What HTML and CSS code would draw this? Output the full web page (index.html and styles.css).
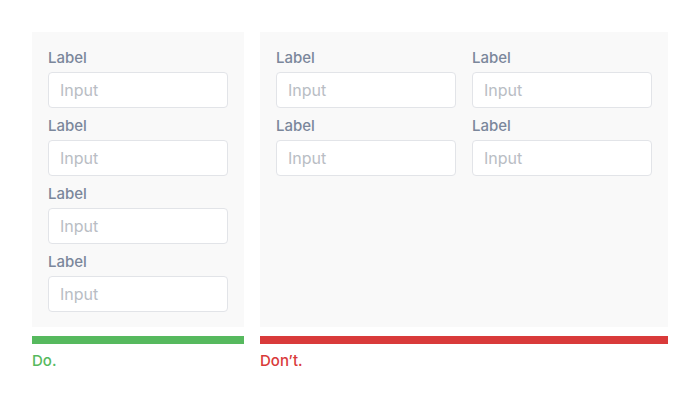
FILE: index.html
```html
<!DOCTYPE html>
<html lang="en">
<head>
  <meta charset="UTF-8">
  <meta name="viewport" content="width=device-width, initial-scale=1.0">
  <title>Form layout: Do / Don't</title>
  <link rel="stylesheet" href="styles.css">
</head>
<body>
  <div class="compare">
    <div class="example narrow">
      <form class="panel">
        <div class="field">
          <label>Label</label>
          <input type="text" placeholder="Input">
        </div>
        <div class="field">
          <label>Label</label>
          <input type="text" placeholder="Input">
        </div>
        <div class="field">
          <label>Label</label>
          <input type="text" placeholder="Input">
        </div>
        <div class="field">
          <label>Label</label>
          <input type="text" placeholder="Input">
        </div>
      </form>
      <div class="bar do"></div>
      <p class="caption do">Do.</p>
    </div>

    <div class="example wide">
      <form class="panel two-cols">
        <div class="field">
          <label>Label</label>
          <input type="text" placeholder="Input">
        </div>
        <div class="field">
          <label>Label</label>
          <input type="text" placeholder="Input">
        </div>
        <div class="field">
          <label>Label</label>
          <input type="text" placeholder="Input">
        </div>
        <div class="field">
          <label>Label</label>
          <input type="text" placeholder="Input">
        </div>
      </form>
      <div class="bar dont"></div>
      <p class="caption dont">Don’t.</p>
    </div>
  </div>
</body>
</html>
```

FILE: styles.css
```css
body {
  margin: 0;
  padding: 32px;
  font-family: 'Inter', 'Noto Sans', sans-serif;
  background: #fff;
}

.compare {
  display: flex;
  gap: 16px;
}

.narrow {
  width: 212px;
}

.wide {
  width: 408px;
}

.panel {
  background: #f9f9f9;
  padding: 16px;
  height: 295px;
  box-sizing: border-box;
  display: grid;
  grid-template-columns: minmax(0, 1fr);
  row-gap: 8px;
  align-content: start;
  margin: 0;
}

.two-cols {
  grid-template-columns: 180px 180px;
  column-gap: 16px;
}

.field {
  display: flex;
  flex-direction: column;
  min-width: 0;
}

.field label {
  font-size: 15px;
  font-weight: 500;
  line-height: 20px;
  color: #7b879b;
  margin-bottom: 4px;
}

.field input {
  width: 100%;
  height: 36px;
  box-sizing: border-box;
  border: 1px solid #e2e4e8;
  border-radius: 4px;
  background: #fff;
  padding: 0 11px;
  font-family: inherit;
  font-size: 16px;
  color: #333;
}

.field input::placeholder {
  color: #b9bdc4;
}

.bar {
  height: 8px;
  margin-top: 9px;
}

.bar.do {
  background: #56b95e;
}

.bar.dont {
  background: #d93a3a;
}

.caption {
  margin: 7px 0 0;
  font-size: 15px;
  font-weight: 500;
  line-height: 20px;
}

.caption.do {
  color: #56b95e;
}

.caption.dont {
  color: #d93a3a;
}
```
